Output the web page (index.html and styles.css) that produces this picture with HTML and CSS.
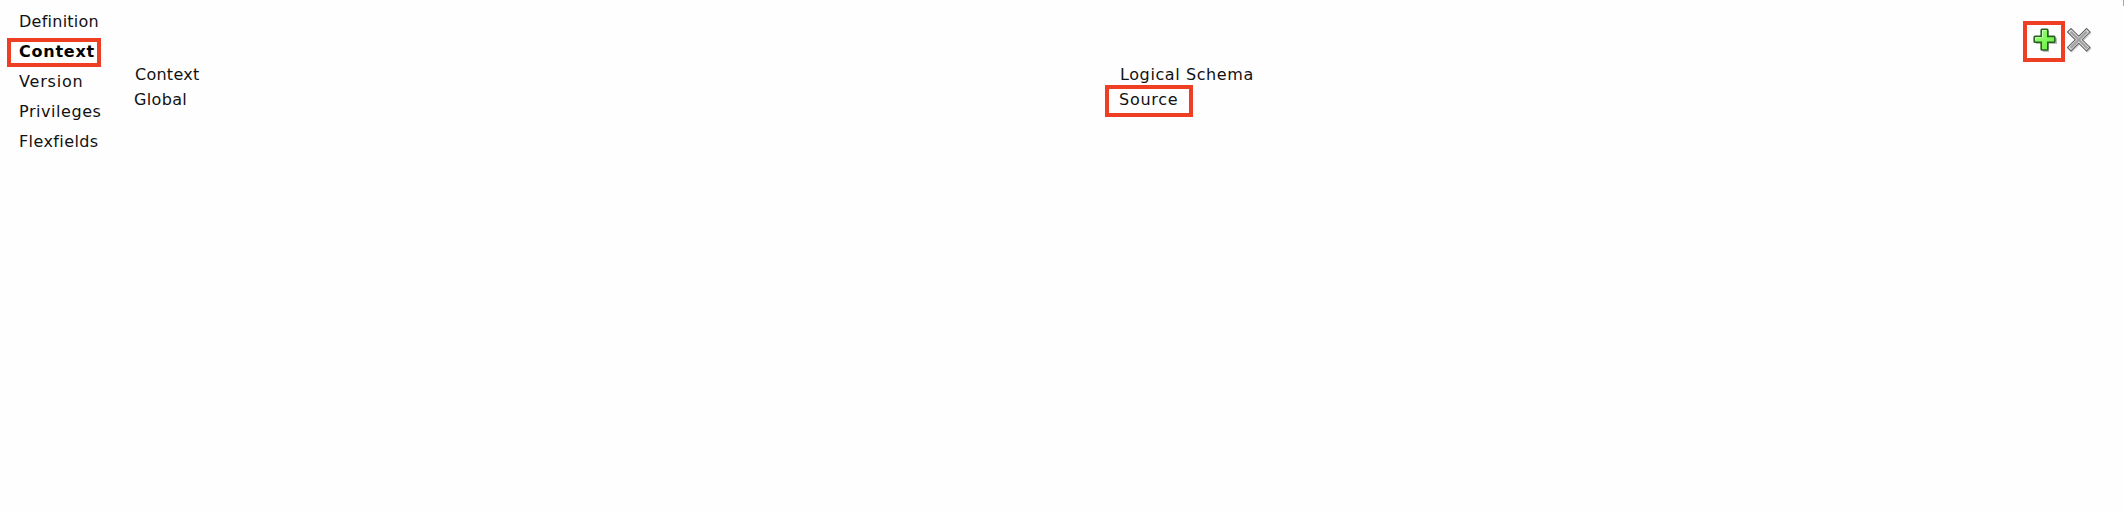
FILE: index.html
```html
<!DOCTYPE html>
<html lang="en">
<head>
<meta charset="utf-8">
<title>Context</title>
<link rel="stylesheet" href="styles.css">
</head>
<body>
<div class="page">
  <nav class="tabs">
    <a class="tab tab-definition">Definition</a>
    <a class="tab tab-active">Context</a>
    <a class="tab tab-version">Version</a>
    <a class="tab tab-privileges">Privileges</a>
    <a class="tab tab-flexfields">Flexfields</a>
  </nav>
  <main class="table">
    <div class="row head"><div class="cell context">Context</div><div class="cell schema">Logical Schema</div></div>
    <div class="row"><div class="cell global">Global</div><div class="cell source">Source</div></div>
  </main>
  <div class="tools">
    <div class="tool add">
      <svg width="25" height="25" viewBox="0 0 25 25">
        <defs><linearGradient id="g" x1="0" y1="0" x2="1" y2="1"><stop offset="0" stop-color="#9cff78"/><stop offset="1" stop-color="#66ee40"/></linearGradient></defs>
        <path d="M10 3h6v7h8v6h-8v8h-6v-8H3v-6h7z" fill="#777" opacity=".5"/>
        <path d="M9 1.200h5q.8 0 .8.8v6.400h6.200q.8 0 .8.8v4.200q0 .8-.8.8h-6.200v7q0 .8-.8.8H9q-.8 0-.8-.8v-7H2q-.8 0-.8-.8V9.200q0-.8.8-.8h6.200V2q0-.8.8-.8z" fill="url(#g)" stroke="#28601f" stroke-width="1.600"/>
        <path d="M9.500 9.500V2.600h4M2.500 12V9.600h6" fill="none" stroke="#cbffb8" stroke-width="1"/>
      </svg>
    </div>
    <svg class="remove" width="25" height="25" viewBox="0 0 25 25">
      <path d="M5 5L20.500 20.500M20.500 5L5 20.500" stroke="#aaa" stroke-width="6" stroke-linecap="square" opacity=".5"/>
      <path d="M4 4L19.500 19.500M19.500 4L4 19.500" stroke="#5c5c5c" stroke-width="6" stroke-linecap="square"/>
      <path d="M4 4L19.500 19.500M19.500 4L4 19.500" stroke="#dedede" stroke-width="4" stroke-linecap="square"/>
      <path d="M4.500 4.500L19.500 19.500M19 4.500L4.500 19" stroke="#a2a2a2" stroke-width="2.400" stroke-linecap="square"/>
    </svg>
  </div>
  <div class="edge"></div>
</div>
</body>
</html>
```
FILE: styles.css
```css
body {
  margin: 0;
  background: #fefefe;
  color: #111;
  font: 16px "DejaVu Sans", sans-serif;
}
.page {
  display: flex;
  width: 2124px;
  height: 512px;
  overflow: hidden;
}
.tabs {
  display: flex;
  flex-direction: column;
  width: 134px;
  padding-top: 7px;
}
.tab {
  position: relative;
  height: 30px;
  padding-left: 19px;
  line-height: 30px;
  white-space: nowrap;
}
.tab-definition { letter-spacing: 0.25px; }
.tab-version { letter-spacing: 0.8px; }
.tab-privileges { letter-spacing: 0.55px; }
.tab-flexfields { letter-spacing: 0.4px; }
.tab-active {
  letter-spacing: 0.75px;
  font-weight: bold;
  color: #000;
}
.tab-active::after {
  content: "";
  position: absolute;
  left: 7px;
  top: 1px;
  width: 86px;
  height: 21px;
  border: 4px solid #ee3f24;
}
.table {
  width: 1889px;
  padding-top: 62px;
}
.row {
  display: grid;
  grid-template-columns: 985px 1fr;
  height: 25px;
  line-height: 26px;
}
.head .cell { padding-left: 1px; }
.context { letter-spacing: 0.25px; }
.schema { letter-spacing: 0.6px; }
.global { letter-spacing: 0.35px; }
.source {
  position: relative;
  letter-spacing: 0.75px;
}
.source::after {
  content: "";
  position: absolute;
  left: -14px;
  top: -2px;
  width: 80px;
  height: 24px;
  border: 4px solid #ee3f24;
}
.tools {
  display: flex;
  align-items: flex-start;
  gap: 2px;
  width: 69px;
  padding-top: 21px;
}
.add {
  flex: none;
  box-sizing: border-box;
  width: 42px;
  height: 41px;
  padding: 3px 0 0 6px;
  border: 4px solid #ee3f24;
}
.add svg { display: block; }
.remove {
  flex: none;
  margin-top: 7px;
}
.edge {
  width: 1px;
  height: 6px;
  margin-left: auto;
  background: #8aaedb;
}
```
